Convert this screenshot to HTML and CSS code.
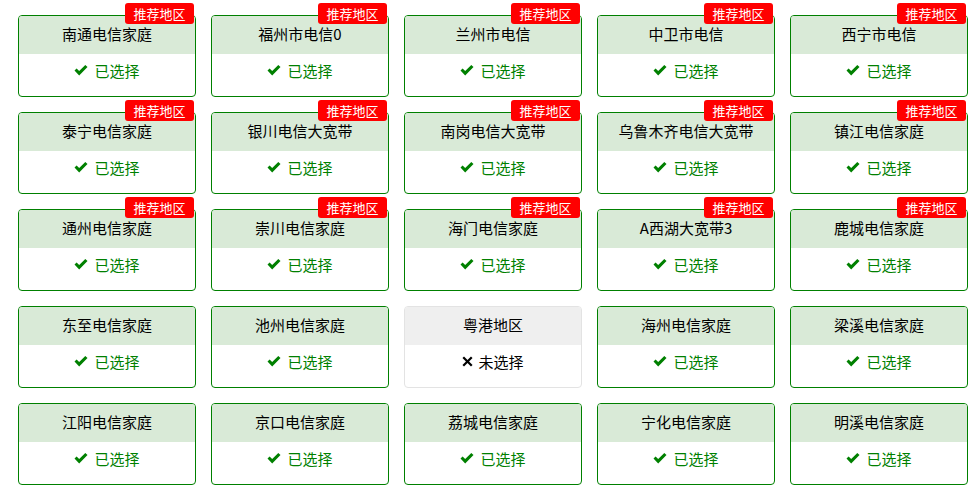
FILE: index.html
```html
<!DOCTYPE html>
<html lang="zh-CN">

<head>
    <meta charset="UTF-8">
    <meta name="viewport" content="width=device-width, initial-scale=1.0">
    <title>地区选择</title>
    <link rel="stylesheet" href="styles.css">
</head>

<body>
    <div class="area-list" id="areaList"></div>

    <svg width="0" height="0" class="defs">
        <symbol id="ico-check" viewBox="0 0 14 11">
            <path d="M0.5 5.6 L2.6 3.5 L5.2 6.1 L11.3 0 L13.5 2.1 L5.2 10.4 Z" />
        </symbol>
        <symbol id="ico-times" viewBox="0 0 12 12">
            <path d="M2.2 0.5 L6 4.3 L9.8 0.5 L11.5 2.2 L7.7 6 L11.5 9.8 L9.8 11.5 L6 7.7 L2.2 11.5 L0.5 9.8 L4.3 6 L0.5 2.2 Z" />
        </symbol>
    </svg>

    <script>
        // 地区数据: 名称, 是否推荐, 是否已选择
        const areas = [
            ['南通电信家庭', true, true],
            ['福州市电信0', true, true],
            ['兰州市电信', true, true],
            ['中卫市电信', true, true],
            ['西宁市电信', true, true],
            ['泰宁电信家庭', true, true],
            ['银川电信大宽带', true, true],
            ['南岗电信大宽带', true, true],
            ['乌鲁木齐电信大宽带', true, true],
            ['镇江电信家庭', true, true],
            ['通州电信家庭', true, true],
            ['崇川电信家庭', true, true],
            ['海门电信家庭', true, true],
            ['A西湖大宽带3', true, true],
            ['鹿城电信家庭', true, true],
            ['东至电信家庭', false, true],
            ['池州电信家庭', false, true],
            ['粤港地区', false, false],
            ['海州电信家庭', false, true],
            ['梁溪电信家庭', false, true],
            ['江阳电信家庭', false, true],
            ['京口电信家庭', false, true],
            ['荔城电信家庭', false, true],
            ['宁化电信家庭', false, true],
            ['明溪电信家庭', false, true]
        ];

        const list = document.getElementById('areaList');

        areas.forEach(([name, hot, selected]) => {
            const card = document.createElement('div');
            card.className = 'area-card' + (selected ? ' selected' : '');

            let html = '';
            if (hot) {
                html += '<span class="badge">推荐地区</span>';
            }
            html += `<div class="area-name">${name}</div>`;
            if (selected) {
                html += '<div class="area-state"><svg class="ico"><use href="#ico-check"/></svg>已选择</div>';
            } else {
                html += '<div class="area-state"><svg class="ico ico-x"><use href="#ico-times"/></svg>未选择</div>';
            }
            card.innerHTML = html;
            list.appendChild(card);
        });
    </script>
</body>
</html>
```

FILE: styles.css
```css
body {
    margin: 0;
    background: #ffffff;
    font-family: "Noto Sans CJK SC", "DejaVu Sans", sans-serif;
    color: #000000;
}

.defs {
    position: absolute;
}

.area-list {
    display: grid;
    grid-template-columns: repeat(5, 178px);
    column-gap: 15px;
    row-gap: 15px;
    padding: 15px 0 0 18px;
}

.area-card {
    position: relative;
    height: 80px;
    border: 1px solid #e3e3e3;
    border-radius: 4px;
    text-align: center;
}

.area-card.selected {
    border-color: #008000;
}

.area-name {
    height: 38px;
    line-height: 35px;
    font-size: 15px;
    background: #efefef;
    border-radius: 3px 3px 0 0;
}

.selected .area-name {
    background: #d9ead7;
}

.area-state {
    display: flex;
    justify-content: center;
    align-items: center;
    gap: 6px;
    height: 32px;
    padding-bottom: 4px;
    font-size: 15px;
    color: #000000;
}

.selected .area-state {
    color: #008000;
}

.ico {
    width: 14px;
    height: 11px;
    fill: #008000;
    margin-top: 1px;
}

.ico-x {
    width: 11px;
    height: 11px;
    fill: #000000;
    margin-right: -1px;
}

.badge {
    position: absolute;
    top: -13px;
    right: 1px;
    width: 69px;
    height: 21px;
    line-height: 21px;
    font-size: 13px;
    color: #ffffff;
    background: #ff0000;
    border-radius: 3px;
    text-align: center;
}
```
